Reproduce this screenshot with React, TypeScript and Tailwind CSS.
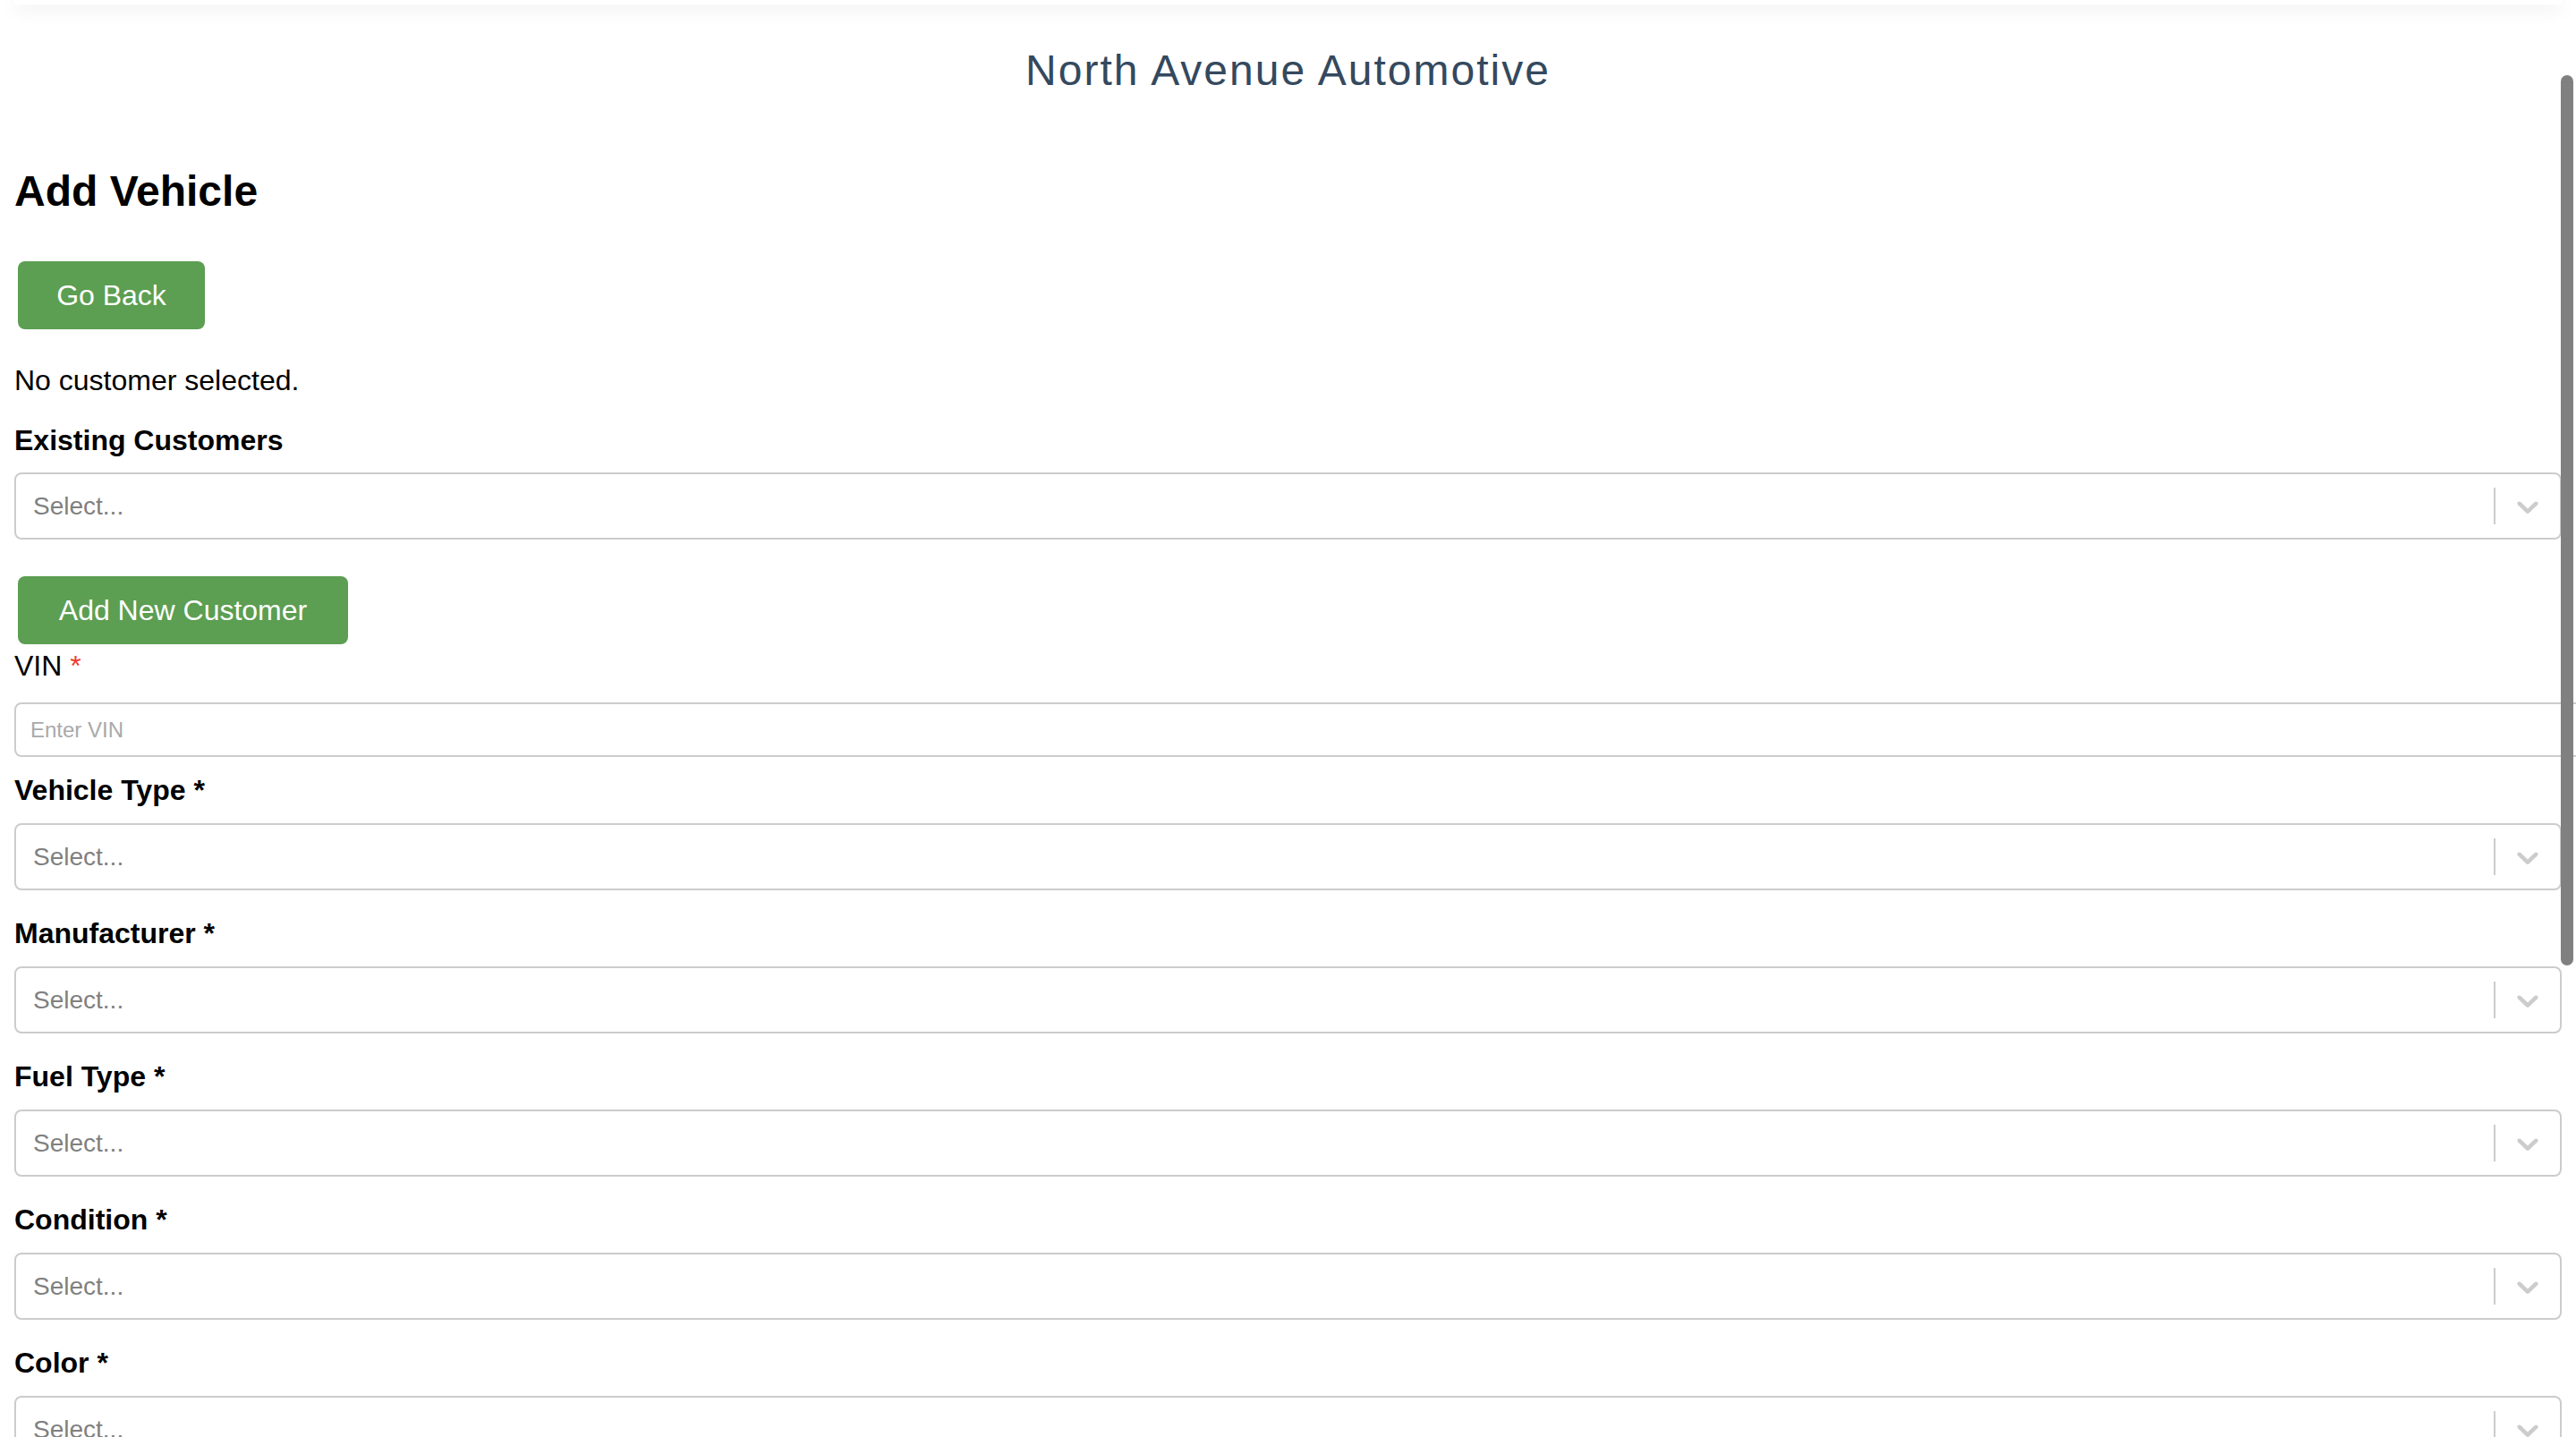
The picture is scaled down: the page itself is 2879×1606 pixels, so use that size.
const selectFields = ["Vehicle Type", "Manufacturer", "Fuel Type", "Condition", "Color"];

function Chevron() {
  return (
    <svg viewBox="0 0 20 20" className="h-[40px] w-[40px] fill-[#cccccc]">
      <path d="M4.516 7.548c0.436-0.446 1.043-0.481 1.576 0l3.908 3.747 3.908-3.747c0.533-0.481 1.141-0.446 1.574 0 0.436 0.445 0.408 1.197 0 1.615-0.406 0.418-4.695 4.502-4.695 4.502-0.217 0.223-0.502 0.335-0.787 0.335s-0.57-0.112-0.789-0.335c0 0-4.287-4.084-4.695-4.502s-0.436-1.17 0-1.615z" />
    </svg>
  );
}

function SelectBox() {
  return (
    <div className="flex h-[75px] items-center rounded-[8px] border-2 border-[#cccccc] bg-white">
      <div className="flex-1 pl-[19px] text-[28px] leading-none text-[#808080]">Select...</div>
      <div className="flex self-stretch py-[15px]">
        <span className="w-[2px] bg-[#cccccc]" />
      </div>
      <div className="px-[16px]">
        <Chevron />
      </div>
    </div>
  );
}

function GreenButton({ children, width }: { children: React.ReactNode; width: string }) {
  return (
    <button
      type="button"
      className={`ml-[4px] flex h-[76px] items-center justify-center rounded-[8px] bg-[#5c9e52] text-[32px] leading-none text-white ${width}`}
    >
      {children}
    </button>
  );
}

export default function App() {
  return (
    <div className="relative h-[1606px] overflow-hidden bg-white font-['Liberation_Sans',Arial,sans-serif] text-black">
      {/* header bar, mostly scrolled away */}
      <div className="mx-[16px] h-[5px] bg-white shadow-[0_4px_20px_rgba(0,0,0,0.14)]" />

      <h1 className="mt-[50px] text-center text-[48px] leading-none tracking-[2px] text-[#34495e]">
        North Avenue Automotive
      </h1>

      <div className="px-[16px]">
        <h2 className="mt-[87px] text-[48px] font-bold leading-none">Add Vehicle</h2>

        <div className="mt-[54px]">
          <GreenButton width="w-[209px]">Go Back</GreenButton>
        </div>

        <p className="mt-[41px] text-[32px] leading-none">No customer selected.</p>

        <div className="mt-[35px] text-[32px] font-bold leading-none">Existing Customers</div>
        <div className="mt-[20px]">
          <SelectBox />
        </div>

        <div className="mt-[41px]">
          <GreenButton width="w-[369px]">Add New Customer</GreenButton>
        </div>

        <div className="mt-[8px] text-[32px] leading-none">
          VIN <span className="text-[#ef3b2d]">*</span>
        </div>
        <input
          type="text"
          placeholder="Enter VIN"
          className="mt-[25px] block h-[61px] w-[calc(100%+40px)] rounded-[8px] border-2 border-[#cccccc] px-[16px] text-[24px] outline-none placeholder:text-[#a9a9a9]"
        />

        <div className="mt-[21px]">
          {selectFields.map((f) => (
            <div key={f} className="mb-[32px]">
              <div className="text-[32px] font-bold leading-none">{f} *</div>
              <div className="mt-[21px]">
                <SelectBox />
              </div>
            </div>
          ))}
        </div>
      </div>

      {/* overlay scrollbar */}
      <div className="absolute right-[3px] top-[84px] h-[995px] w-[14px] rounded-full bg-[#808080]" />
    </div>
  );
}
